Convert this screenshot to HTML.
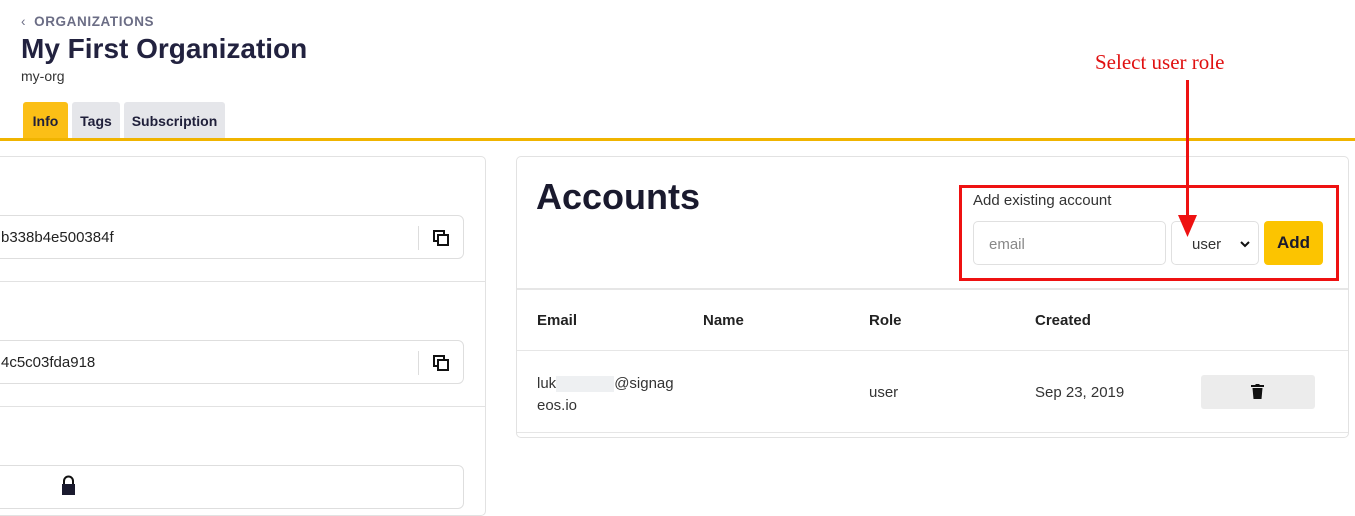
<!DOCTYPE html>
<html><head><meta charset="utf-8"><style>
*{box-sizing:border-box;margin:0;padding:0}
body{width:1355px;height:499px;overflow:hidden;background:#fff;font-family:"Liberation Sans",sans-serif;color:#1f1f3a;position:relative}
.a{position:absolute}
.inp{position:absolute;left:-10px;width:474px;height:44px;border:1px solid #dedede;border-radius:6px;font-size:15px;color:#222;padding:13px 0 0 10px}
.inp .sep{position:absolute;right:44px;top:10px;width:1px;height:24px;background:#ddd}
.copy{position:absolute;right:14px;top:14px;width:16px;height:16px}
.th{position:absolute;top:312px;font-size:15px;font-weight:bold;color:#222}
.td{position:absolute;font-size:15px;color:#333}
</style></head><body>
<div class="a" style="left:21px;top:14px;font-size:13.5px;font-weight:bold;color:#6b6d85;letter-spacing:.6px"><span style="font-weight:normal;margin-right:8px">&lsaquo;</span>ORGANIZATIONS</div>
<div class="a" style="left:21px;top:33px;font-size:28px;font-weight:bold;color:#22223f">My First Organization</div>
<div class="a" style="left:21px;top:68px;font-size:14px;color:#333">my-org</div>
<div class="a" style="left:23px;top:102px;width:45px;height:37px;background:#fbbf16;border-radius:3px 3px 0 0;font-size:14px;font-weight:bold;padding-top:11px;text-align:center">Info</div>
<div class="a" style="left:72px;top:102px;width:48px;height:37px;background:#e5e6ea;border-radius:3px 3px 0 0;font-size:14px;font-weight:bold;padding-top:11px;text-align:center">Tags</div>
<div class="a" style="left:124px;top:102px;width:101px;height:37px;background:#e5e6ea;border-radius:3px 3px 0 0;font-size:14px;font-weight:bold;padding-top:11px;text-align:center">Subscription</div>
<div class="a" style="left:0;top:138px;width:1355px;height:3px;background:#f0b400"></div>

<div class="a" style="left:-10px;top:156px;width:496px;height:360px;border:1px solid #e2e2e2;border-radius:5px"></div>
<div class="a" style="left:0;top:281px;width:486px;height:1px;background:#e2e2e2"></div>
<div class="a" style="left:0;top:406px;width:486px;height:1px;background:#e2e2e2"></div>
<div class="inp" style="top:215px">b338b4e500384f<div class="sep"></div><svg class="copy" viewBox="0 0 16 16"><rect x="1" y="1" width="10" height="10" fill="none" stroke="#111" stroke-width="2"/><rect x="5" y="5" width="10" height="10" fill="#fff" stroke="#111" stroke-width="2"/></svg></div>
<div class="inp" style="top:340px">4c5c03fda918<div class="sep"></div><svg class="copy" viewBox="0 0 16 16"><rect x="1" y="1" width="10" height="10" fill="none" stroke="#111" stroke-width="2"/><rect x="5" y="5" width="10" height="10" fill="#fff" stroke="#111" stroke-width="2"/></svg></div>
<div class="inp" style="top:465px"></div>
<svg class="a" style="left:61px;top:475px" width="15" height="20" viewBox="0 0 15 20"><path d="M3 9V6a4.5 4.5 0 0 1 9 0v3" fill="none" stroke="#111" stroke-width="2"/><rect x="1" y="9" width="13" height="11" fill="#1a1a2e"/></svg>

<div class="a" style="left:516px;top:156px;width:833px;height:282px;border:1px solid #e2e2e2;border-radius:5px"></div>
<div class="a" style="left:517px;top:288px;width:831px;height:2px;background:#e6e6e6"></div>
<div class="a" style="left:517px;top:350px;width:831px;height:1px;background:#e6e6e6"></div>
<div class="a" style="left:517px;top:432px;width:831px;height:1px;background:#e6e6e6"></div>
<div class="a" style="left:536px;top:176px;font-size:36px;font-weight:bold;color:#1a1a2e">Accounts</div>
<div class="a" style="left:973px;top:192px;font-size:15px;color:#333">Add existing account</div>
<div class="a" style="left:973px;top:221px;width:193px;height:44px;border:1px solid #e0e0e0;border-radius:5px;font-size:15px;color:#888;padding:14px 0 0 15px">email</div>
<div class="a" style="left:1171px;top:221px;width:88px;height:44px;border:1px solid #e0e0e0;border-radius:5px;font-size:15px;color:#333;padding:14px 0 0 20px">user<svg style="position:absolute;right:8px;top:19px" width="10" height="7"><path d="M1 1l4 4 4-4" fill="none" stroke="#111" stroke-width="2"/></svg></div>
<div class="a" style="left:1264px;top:221px;width:59px;height:44px;background:#fcc400;border-radius:4px;font-size:17px;font-weight:bold;text-align:center;padding-top:12px;color:#1a1a2e">Add</div>
<div class="a" style="left:959px;top:185px;width:380px;height:96px;border:3px solid #ee1111"></div>
<div class="a" style="left:1095px;top:50px;font-family:'Liberation Serif',serif;font-size:21px;color:#e01010">Select user role</div>
<div class="a" style="left:1186px;top:80px;width:3px;height:140px;background:#ee1111"></div>
<svg class="a" style="left:1178px;top:215px" width="19" height="22"><path d="M0 0H19L9.5 22Z" fill="#ee1111"/></svg>

<div class="th" style="left:537px">Email</div>
<div class="th" style="left:703px">Name</div>
<div class="th" style="left:869px">Role</div>
<div class="th" style="left:1035px">Created</div>
<div class="td" style="left:537px;top:373px;line-height:22px">luk<span style="display:inline-block;width:58px;height:16px;background:#eef0f2;vertical-align:middle"></span>@signag<br>eos.io</div>
<div class="td" style="left:869px;top:384px">user</div>
<div class="td" style="left:1035px;top:384px">Sep 23, 2019</div>
<div class="a" style="left:1201px;top:375px;width:114px;height:34px;background:#ececec;border-radius:3px"></div>
<svg class="a" style="left:1251px;top:384px" width="13" height="15" viewBox="0 0 13 15"><rect x="0" y="1" width="13" height="2" fill="#111"/><rect x="4.5" y="0" width="4" height="2" fill="#111"/><path d="M1.5 4H11.5L10.5 15H2.5Z" fill="#111"/></svg>
</body></html>
